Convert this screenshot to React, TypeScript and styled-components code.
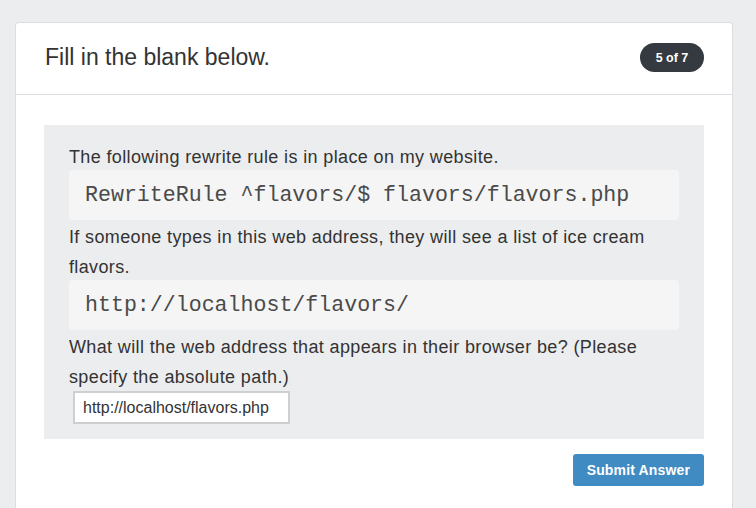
import { FunctionComponent } from "react";
import styled, { createGlobalStyle } from "styled-components";

const GlobalStyle = createGlobalStyle`
  html, body {
    margin: 0;
    padding: 0;
    background: #ecedef;
    font-family: "Liberation Sans", Arial, sans-serif;
    color: #333;
  }
`;

const Page = styled.div`
  padding: 22px 23px 0 15px;
`;

const Card = styled.div`
  background: #fff;
  border: 1px solid #dcdde0;
  border-bottom: none;
  border-radius: 4px 4px 0 0;
  min-height: 500px;
`;

const Header = styled.div`
  display: flex;
  align-items: center;
  justify-content: space-between;
  height: 71px;
  padding: 0 28px 0 29px;
  border-bottom: 1px solid #dcdde0;
`;

const Title = styled.h1`
  margin: 0;
  font-size: 23px;
  font-weight: normal;
  color: #333;
  padding-bottom: 2px;
`;

const Badge = styled.span`
  display: inline-flex;
  align-items: center;
  justify-content: center;
  width: 64px;
  height: 29px;
  border-radius: 15px;
  background: #343a3f;
  color: #fff;
  font-size: 12.5px;
  font-weight: bold;
  margin-bottom: 2px;
`;

const Body = styled.div`
  padding: 30px 28px 0 28px;
`;

const Question = styled.div`
  background: #ecedef;
  padding: 15px 25px;
  font-size: 18px;
  letter-spacing: 0.37px;
  line-height: 30px;
`;

const Line = styled.p`
  margin: 0 0 -2px;
  padding-top: 2px;
`;

const Code = styled.pre`
  margin: 0;
  height: 50px;
  padding: 0 16px;
  display: flex;
  align-items: center;
  background: #f5f5f5;
  border-radius: 4px;
  font-family: "Liberation Mono", "Courier New", monospace;
  font-size: 21.6px;
  letter-spacing: 0;
  color: #4a4a4a;
`;

const AnswerInput = styled.input`
  display: block;
  box-sizing: border-box;
  margin: 1px 0 0 4px;
  width: 217px;
  height: 33px;
  padding: 0 8px;
  border: 2px solid #cfcfcf;
  background: #fff;
  font-family: "Liberation Sans", Arial, sans-serif;
  font-size: 16px;
  color: #333;
  outline: none;
`;

const Actions = styled.div`
  display: flex;
  justify-content: flex-end;
  padding-top: 15px;
`;

const SubmitButton = styled.button`
  height: 32px;
  padding: 0 14px;
  border: none;
  border-radius: 3px;
  background: #418bc3;
  color: #fff;
  font-family: "Liberation Sans", Arial, sans-serif;
  font-size: 14px;
  font-weight: bold;
  letter-spacing: 0.15px;
`;

const App: FunctionComponent = () => {
  return (
    <>
      <GlobalStyle />
      <Page>
        <Card>
          <Header>
            <Title>Fill in the blank below.</Title>
            <Badge>5 of 7</Badge>
          </Header>
          <Body>
            <Question>
              <Line>The following rewrite rule is in place on my website.</Line>
              <Code>RewriteRule ^flavors/$ flavors/flavors.php</Code>
              <Line>
                If someone types in this web address, they will see a list of
                ice cream flavors.
              </Line>
              <Code>http://localhost/flavors/</Code>
              <Line>
                What will the web address that appears in their browser be?
                (Please specify the absolute path.)
              </Line>
              <AnswerInput defaultValue="http://localhost/flavors.php" />
            </Question>
            <Actions>
              <SubmitButton>Submit Answer</SubmitButton>
            </Actions>
          </Body>
        </Card>
      </Page>
    </>
  );
};

export default App;
